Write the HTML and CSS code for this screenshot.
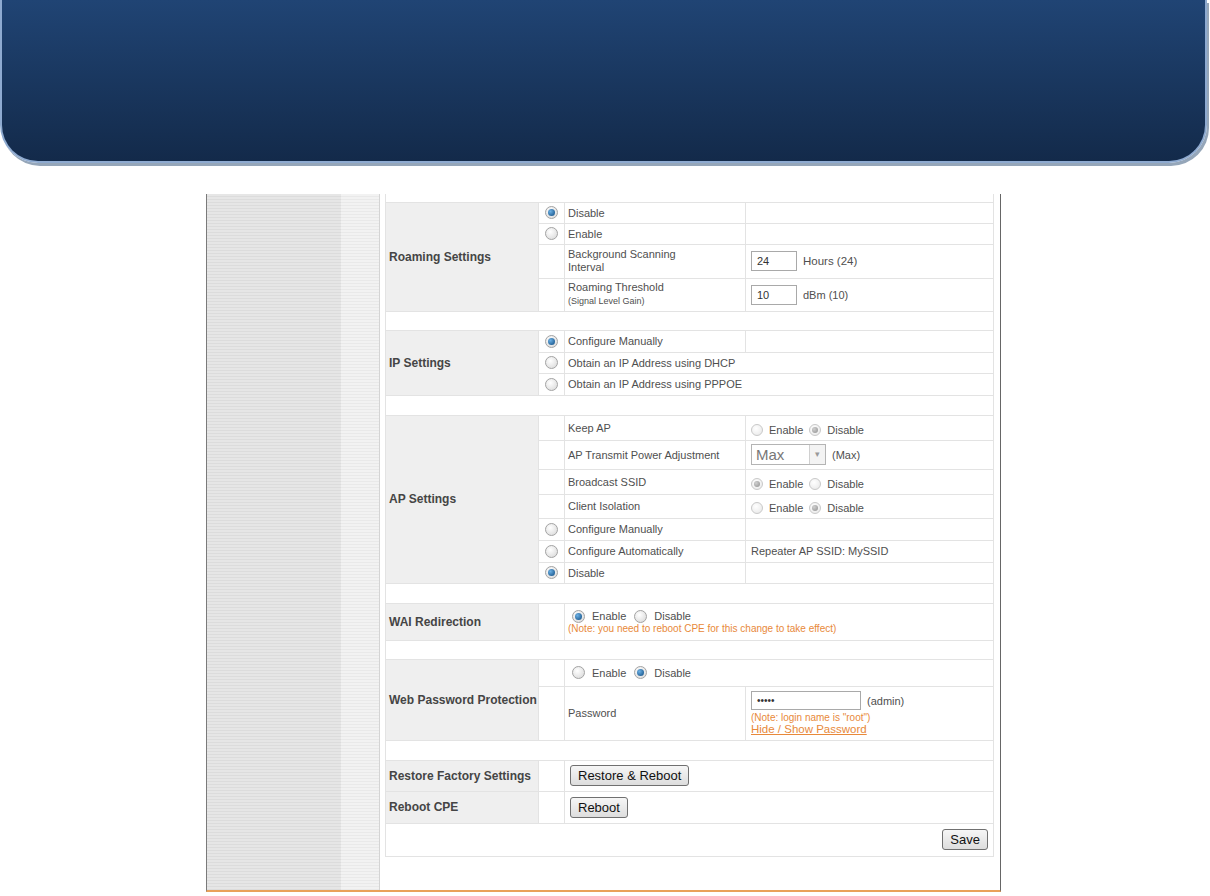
FILE: index.html
```html
<!DOCTYPE html>
<html lang="en">
<head>
    <meta charset="UTF-8">
    <title>CPE Settings</title>
    <link rel="stylesheet" href="styles.css">
</head>
<body>
    <div class="header"></div>

    <div class="frame">
        <div class="sidebar">
            <div class="stripes"></div>
            <div class="shade"></div>
        </div>

        <div class="main">
            <table class="settings">
                <colgroup>
                    <col class="c-label">
                    <col class="c-radio">
                    <col class="c-text">
                    <col class="c-value">
                </colgroup>

                <tr class="gap-top"><td colspan="4"></td></tr>

                <!-- Roaming -->
                <tr class="h21">
                    <th rowspan="4">Roaming Settings</th>
                    <td class="rc"><span class="radio on"></span></td>
                    <td>Disable</td>
                    <td></td>
                </tr>
                <tr class="h21">
                    <td class="rc"><span class="radio"></span></td>
                    <td>Enable</td>
                    <td></td>
                </tr>
                <tr class="h34">
                    <td class="rc"></td>
                    <td class="two">Background Scanning<br>Interval</td>
                    <td class="val"><span class="field">24</span><span class="unit big">Hours (24)</span></td>
                </tr>
                <tr class="h33">
                    <td class="rc"></td>
                    <td class="two">Roaming Threshold<br><small>(Signal Level Gain)</small></td>
                    <td class="val"><span class="field">10</span><span class="unit">dBm (10)</span></td>
                </tr>

                <tr class="gap g19"><td colspan="4"></td></tr>

                <!-- IP -->
                <tr class="h22">
                    <th rowspan="3">IP Settings</th>
                    <td class="rc"><span class="radio on"></span></td>
                    <td>Configure Manually</td>
                    <td></td>
                </tr>
                <tr class="h21">
                    <td class="rc"><span class="radio"></span></td>
                    <td colspan="2">Obtain an IP Address using DHCP</td>
                </tr>
                <tr class="h22">
                    <td class="rc"><span class="radio"></span></td>
                    <td colspan="2">Obtain an IP Address using PPPOE</td>
                </tr>

                <tr class="gap"><td colspan="4"></td></tr>

                <!-- AP -->
                <tr class="h25">
                    <th rowspan="7">AP Settings</th>
                    <td class="rc"></td>
                    <td>Keep AP</td>
                    <td class="val low"><span class="radio grey"></span><span class="opt">Enable</span><span class="radio grey on"></span><span class="opt">Disable</span></td>
                </tr>
                <tr class="h29">
                    <td class="rc"></td>
                    <td>AP Transmit Power Adjustment</td>
                    <td class="val">
                        <span class="select"><span class="select-text">Max</span><span class="select-arrow">&#9662;</span></span><span class="unit">(Max)</span>
                    </td>
                </tr>
                <tr class="h25">
                    <td class="rc"></td>
                    <td>Broadcast SSID</td>
                    <td class="val low"><span class="radio grey on"></span><span class="opt">Enable</span><span class="radio grey"></span><span class="opt">Disable</span></td>
                </tr>
                <tr class="h24">
                    <td class="rc"></td>
                    <td>Client Isolation</td>
                    <td class="val low"><span class="radio grey"></span><span class="opt">Enable</span><span class="radio grey on"></span><span class="opt">Disable</span></td>
                </tr>
                <tr class="h22">
                    <td class="rc"><span class="radio"></span></td>
                    <td>Configure Manually</td>
                    <td></td>
                </tr>
                <tr class="h22">
                    <td class="rc"><span class="radio"></span></td>
                    <td>Configure Automatically</td>
                    <td class="val">Repeater AP SSID: MySSID</td>
                </tr>
                <tr class="h21">
                    <td class="rc"><span class="radio on"></span></td>
                    <td>Disable</td>
                    <td></td>
                </tr>

                <tr class="gap"><td colspan="4"></td></tr>

                <!-- WAI -->
                <tr class="h37">
                    <th>WAI Redirection</th>
                    <td class="rc"></td>
                    <td colspan="2" class="choice wai">
                        <span class="radio on"></span><span class="opt">Enable</span><span class="radio"></span><span class="opt">Disable</span>
                        <div class="note">(Note: you need to reboot CPE for this change to take effect)</div>
                    </td>
                </tr>

                <tr class="gap g19"><td colspan="4"></td></tr>

                <!-- Web password -->
                <tr class="h27">
                    <th rowspan="2">Web Password Protection</th>
                    <td class="rc"></td>
                    <td colspan="2" class="choice"><span class="radio"></span><span class="opt">Enable</span><span class="radio on"></span><span class="opt">Disable</span></td>
                </tr>
                <tr class="h54">
                    <td class="rc"></td>
                    <td>Password</td>
                    <td class="val pw">
                        <div><span class="field wide">&bull;&bull;&bull;&bull;&bull;</span><span class="unit">(admin)</span></div>
                        <div class="note">(Note: login name is "root")</div>
                        <a class="toggle" href="#">Hide / Show Password</a>
                    </td>
                </tr>

                <tr class="gap"><td colspan="4"></td></tr>

                <!-- Actions -->
                <tr class="h31">
                    <th>Restore Factory Settings</th>
                    <td class="rc"></td>
                    <td colspan="2" class="act"><button class="btn">Restore &amp; Reboot</button></td>
                </tr>
                <tr class="h32">
                    <th>Reboot CPE</th>
                    <td class="rc"></td>
                    <td colspan="2" class="act"><button class="btn">Reboot</button></td>
                </tr>
                <tr class="h33">
                    <td colspan="4" class="save"><button class="btn">Save</button></td>
                </tr>
            </table>
        </div>
    </div>
</body>
</html>
```

FILE: styles.css
```css
body {
    margin: 0;
    background-color: #fff;
    font-family: "Liberation Sans", Arial, sans-serif;
    font-size: 11px;
    color: #4f4f4f;
}
.header {
    height: 161px;
    margin-right: 3px;
    border: 2px solid #8eaad0;
    border-top: 0;
    border-radius: 0 0 38px 38px;
    background: linear-gradient(#204474, #132a4a);
    box-shadow: 2px 3px 0 #95a6b9;
}
.frame {
    display: flex;
    width: 793px;
    height: 696px;
    margin: 31px 0 0 206px;
    border-left: 1px solid #7a7a7a;
    border-right: 1px solid #666;
    border-bottom: 2px solid #e9a15a;
}
.sidebar {
    display: flex;
    width: 172px;
    border-right: 1px solid #d4d4d4;
}
.stripes {
    width: 134px;
    background: repeating-linear-gradient(#e6e6e6 0 2px, #dcdcdc 2px 3px);
}
.shade {
    flex: 1;
    background: repeating-linear-gradient(#f2f2f2 0 2px, #e9e9e9 2px 3px);
}
.main {
    padding: 0 0 0 5px;
}

/* settings table */
.settings {
    width: 608px;
    border-collapse: collapse;
    table-layout: fixed;
}
.c-label { width: 153px; }
.c-radio { width: 26px; }
.c-text { width: 181px; }
.c-value { width: 248px; }
.settings td,
.settings th {
    border: 1px solid #e3e3e3;
    padding: 0 3px;
    vertical-align: middle;
}
.settings th {
    background-color: #efefef;
    text-align: left;
    font-size: 12px;
    font-weight: bold;
    color: #454545;
    padding: 0 0 0 3px;
    white-space: nowrap;
}
.gap-top { height: 8px; }
.gap-top td { border-top: 0; }
.gap { height: 20px; }
.gap.g19 { height: 19px; }
.h21 { height: 21px; }
.h22 { height: 22px; }
.h24 { height: 24px; }
.h25 { height: 25px; }
.h27 { height: 27px; }
.h29 { height: 29px; }
.h31 { height: 31px; }
.h32 { height: 32px; }
.h33 { height: 33px; }
.h34 { height: 34px; }
.h37 { height: 37px; }
.h54 { height: 54px; }

.settings td.rc {
    text-align: center;
    padding: 0;
}
.two {
    line-height: 13px;
}
.two small {
    font-size: 9px;
}
.settings td.val {
    padding-left: 5px;
}
.settings td.low {
    padding-top: 3px;
}
.settings td.act {
    padding-left: 5px;
}
.settings td.choice {
    padding-left: 7px;
}

/* radios */
.radio {
    display: inline-block;
    position: relative;
    width: 11px;
    height: 11px;
    border: 1px solid #a4a4a4;
    border-radius: 50%;
    background: radial-gradient(circle at 40% 35%, #fff, #d6d6d6);
    vertical-align: middle;
}
.radio.on::after {
    content: "";
    position: absolute;
    left: 2px;
    top: 2px;
    width: 7px;
    height: 7px;
    border-radius: 50%;
    background: radial-gradient(circle at 35% 35%, #6cb0e4, #0d4a80);
}
.radio.grey {
    width: 10px;
    height: 10px;
    border-color: #c9c9c9;
    background: radial-gradient(circle at 40% 35%, #fff, #e6e6e6);
}
.radio.grey.on::after {
    width: 6px;
    height: 6px;
    background: radial-gradient(circle at 35% 35%, #d0d0d0, #8f8f8f);
}
.opt {
    margin: 0 6px;
    vertical-align: middle;
}
.choice .opt {
    margin: 0 8px 0 7px;
}

/* fields */
.field {
    display: inline-block;
    box-sizing: border-box;
    width: 46px;
    height: 20px;
    padding: 3px 0 0 5px;
    border: 1px solid #a9a9a9;
    background-color: #fff;
    color: #333;
    font-size: 11px;
    vertical-align: middle;
}
.field.wide {
    width: 110px;
    height: 19px;
    font-size: 10px;
    padding-top: 3px;
}
.unit {
    margin-left: 6px;
    vertical-align: middle;
}
.unit.big {
    font-size: 11.5px;
}
.select {
    display: inline-flex;
    box-sizing: border-box;
    width: 75px;
    height: 21px;
    border: 1px solid #b4b4b4;
    background-color: #fff;
    vertical-align: middle;
}
.select-text {
    flex: 1;
    padding: 1px 0 0 4px;
    font-size: 15px;
    color: #777;
}
.select-arrow {
    width: 15px;
    border-left: 1px solid #d0d0d0;
    background-color: #f3f3f3;
    color: #999;
    font-size: 9px;
    text-align: center;
    line-height: 19px;
}
.wai {
    padding-top: 2px;
}
.wai .note {
    margin-left: -4px;
}
.note {
    font-size: 10px;
    color: #e8893a;
}
.pw .note {
    margin-top: 2px;
}
.toggle {
    color: #e8893a;
    font-size: 11.5px;
}

/* buttons */
.btn {
    height: 21px;
    padding: 0 7px;
    border: 1px solid #707070;
    border-radius: 3px;
    background: linear-gradient(#f6f6f6, #dddddd);
    font-family: "Liberation Sans", Arial, sans-serif;
    font-size: 13px;
    color: #111;
    vertical-align: middle;
}
.settings td.save {
    text-align: right;
    padding-right: 5px;
}
```
